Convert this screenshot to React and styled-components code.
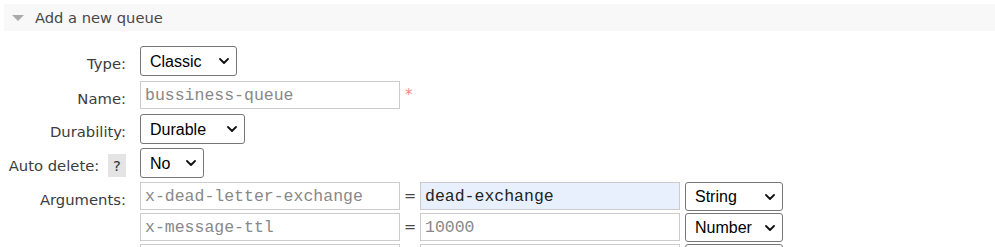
import React from 'react';
import styled, {createGlobalStyle} from 'styled-components';

const GlobalStyle = createGlobalStyle`
  html, body {
    margin: 0;
    padding: 0;
    background: #fff;
    overflow: hidden;
  }
  body {
    font-family: "DejaVu Sans", Verdana, sans-serif;
    color: #484848;
  }
`

const Chevron = () => (
    <svg width="10" height="6" viewBox="0 0 10 6">
        <path d="M1 1 L5 5 L9 1" fill="none" stroke="#111" strokeWidth="1.8" strokeLinecap="round" strokeLinejoin="round"/>
    </svg>
)

const Select = ({value, width, height}) => (
    <SelectWrap $width={width} $height={height}>
        <NativeSelect defaultValue={value}>
            <option>{value}</option>
        </NativeSelect>
        <span className="arrow"><Chevron/></span>
    </SelectWrap>
)

const args = [
    {key: 'x-dead-letter-exchange', value: 'dead-exchange', type: 'String', filled: true},
    {key: 'x-message-ttl', value: '10000', type: 'Number'},
    {key: '', value: '', type: 'String'},
]

const App = () => {
    return (
        <Page>
            <GlobalStyle/>
            <Section>
                <Toggle>
                    <span className="triangle"/>
                    <span>Add a new queue</span>
                </Toggle>
                <Form>
                    <Row $space={5}>
                        <Label>Type:</Label>
                        <Select value="Classic" width={97}/>
                    </Row>
                    <Row $space={5}>
                        <Label>Name:</Label>
                        <Field>
                            <TextInput defaultValue="bussiness-queue"/>
                            <Mandatory>*</Mandatory>
                        </Field>
                    </Row>
                    <Row $space={4}>
                        <Label>Durability:</Label>
                        <Select value="Durable" width={105}/>
                    </Row>
                    <Row $space={4}>
                        <Label>Auto delete: <Help>?</Help></Label>
                        <Select value="No" width={64}/>
                    </Row>
                    <Row $space={0}>
                        <Label>Arguments:</Label>
                        <ArgList>
                            {args.map((arg, i) => (
                                <ArgRow key={i}>
                                    <TextInput defaultValue={arg.key}/>
                                    <Equals>=</Equals>
                                    <TextInput defaultValue={arg.value} $filled={arg.filled}/>
                                    <TypeCell>
                                        <Select value={arg.type} width={98} height={29}/>
                                    </TypeCell>
                                </ArgRow>
                            ))}
                        </ArgList>
                    </Row>
                </Form>
            </Section>
        </Page>
    )
}

const Page = styled.div`
  padding: 4px 0 0 4px;
  height: 247px;
  box-sizing: border-box;
  overflow: hidden;
`
const Section = styled.div`
`
const Toggle = styled.h2`
  margin: 0;
  height: 27px;
  background: #f8f8f8;
  display: flex;
  align-items: center;
  font-weight: normal;
  font-size: 14.7px;
  color: #484848;
  padding-left: 8px;
  .triangle {
    width: 0;
    height: 0;
    border-left: 6.5px solid transparent;
    border-right: 6.5px solid transparent;
    border-top: 6px solid #aaa;
    margin-right: 11px;
    margin-top: 1px;
  }
`
const Form = styled.div`
  padding-top: 15px;
  display: flex;
  flex-direction: column;
`
const Row = styled.div`
  display: grid;
  grid-template-columns: 122px auto;
  column-gap: 14px;
  align-items: start;
  margin-bottom: ${p => p.$space}px;
`
const Label = styled.div`
  text-align: right;
  font-size: 14.8px;
  line-height: 17px;
  padding-top: 9px;
  white-space: nowrap;
  color: #3c3c3c;
`
const Help = styled.span`
  display: inline-block;
  background: #e4e4e4;
  color: #333;
  width: 18px;
  height: 23px;
  line-height: 23px;
  text-align: center;
  margin-left: 4px;
  vertical-align: middle;
  margin-top: -3px;
`
const Field = styled.div`
  display: flex;
  align-items: flex-start;
`
const TextInput = styled.input`
  box-sizing: border-box;
  width: 260px;
  height: 28px;
  border: 1px solid #ccc;
  border-radius: 0;
  padding: 0 4px;
  margin: 0;
  font-family: "Liberation Mono", "Courier New", monospace;
  font-size: 16.5px;
  color: ${p => p.$filled ? '#222' : '#888'};
  background: ${p => p.$filled ? '#e8f0fe' : '#fff'};
  outline: none;
`
const Mandatory = styled.span`
  color: #f88;
  font-size: 15px;
  margin-left: 5px;
  margin-top: 5px;
`
const SelectWrap = styled.span`
  position: relative;
  display: inline-block;
  width: ${p => p.$width}px;
  height: ${p => p.$height || 30}px;
  .arrow {
    position: absolute;
    right: 8px;
    top: 50%;
    margin-top: -3px;
    line-height: 0;
    pointer-events: none;
  }
`
const NativeSelect = styled.select`
  appearance: none;
  box-sizing: border-box;
  width: 100%;
  height: 100%;
  margin: 0;
  padding: 0 20px 0 9px;
  border: 1px solid #767676;
  border-radius: 3px;
  background: #fff;
  color: #000;
  font-family: "Liberation Sans", Arial, sans-serif;
  font-size: 16px;
  outline: none;
`
const ArgList = styled.div`
  display: flex;
  flex-direction: column;
  gap: 2px;
`
const ArgRow = styled.div`
  display: flex;
  align-items: flex-start;
`
const Equals = styled.span`
  width: 20px;
  text-align: center;
  font-size: 14.5px;
  line-height: 28px;
  color: #484848;
`
const TypeCell = styled.div`
  margin-left: 5px;
`

export default App;
